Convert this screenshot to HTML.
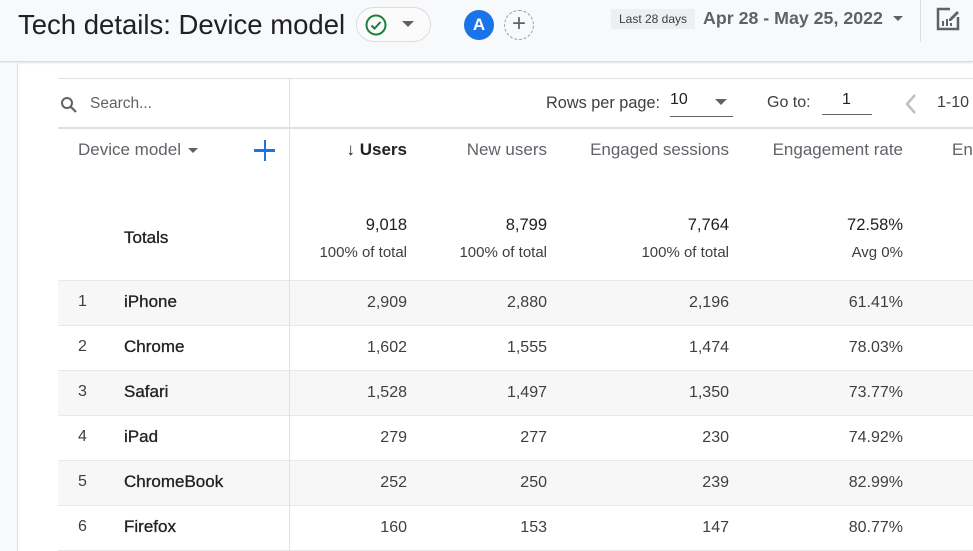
<!DOCTYPE html>
<html><head><meta charset="utf-8"><style>
*{margin:0;padding:0;box-sizing:border-box}
body{width:973px;height:551px;overflow:hidden;background:#fff;font-family:"Liberation Sans",Arial,sans-serif;color:#202124;position:relative}
.a{position:absolute;white-space:nowrap}
.r{text-align:right}
.hdr{left:0;top:0;width:973px;height:62px;background:#f8f9fa;border-bottom:1px solid #dadce0;box-shadow:0 1px 2px rgba(0,0,0,.12)}
.strip{left:0;top:63px;width:18px;height:488px;background:#f8f9fa;border-right:1px solid #e0e0e0}
.row{left:58px;width:915px;height:45px;border-bottom:1px solid #e8e8e8}
.sh{background:#f7f7f7}
.num{font-size:16px;color:#3c4043}
.nm{font-size:17px;color:#202124;left:124px;-webkit-text-stroke:0.3px #202124}
.idx{font-size:16px;left:78px;color:#3c4043}
.ch{font-size:17px;color:#5f6368}
</style></head><body>
<div class="a hdr"></div>
<div class="a" style="left:18px;top:9px;font-size:27.5px;color:#202124">Tech details: Device model</div>
<div class="a" style="left:356px;top:7px;width:75px;height:35px;border:1px solid #dadce0;border-radius:18px;background:#fbfbfb"></div>
<svg class="a" style="left:364px;top:13px" width="24" height="24" viewBox="0 0 24 24"><circle cx="12" cy="12" r="9.5" fill="none" stroke="#188038" stroke-width="2"/><path d="M7.5 12.5l3 3 6-6.5" fill="none" stroke="#188038" stroke-width="2"/></svg>
<div class="a" style="left:402px;top:21px;width:0;height:0;border-left:6px solid transparent;border-right:6px solid transparent;border-top:6px solid #5f6368"></div>
<div class="a" style="left:464px;top:10px;width:30px;height:30px;border-radius:50%;background:#1a73e8;color:#fff;font-weight:bold;font-size:17px;text-align:center;line-height:30px">A</div>
<div class="a" style="left:504px;top:10px;width:30px;height:30px;border-radius:50%;border:1px dashed #9aa0a6;color:#5f6368;font-size:24px;text-align:center;line-height:26px">+</div>
<div class="a" style="left:611px;top:9px;width:84px;height:20px;background:#eeeff0;font-size:12px;color:#3c4043;text-align:center;line-height:20px">Last 28 days</div>
<div class="a" style="left:703px;top:8px;font-size:17.8px;font-weight:bold;color:#5f6368">Apr 28 - May 25, 2022</div>
<div class="a" style="left:893px;top:16px;width:0;height:0;border-left:5px solid transparent;border-right:5px solid transparent;border-top:5px solid #5f6368"></div>
<div class="a" style="left:920px;top:0;width:1px;height:42px;background:#dadce0"></div>
<svg class="a" style="left:935px;top:6px" width="26" height="26" viewBox="0 0 26 26"><path d="M15 3H3v20h20V11" fill="none" stroke="#5f6368" stroke-width="2.5"/><path d="M14 13l8-8 2 2-8 8h-2z" fill="#5f6368"/><rect x="7" y="15" width="2" height="5" fill="#5f6368"/><rect x="11" y="13" width="2" height="7" fill="#5f6368"/><rect x="15" y="17" width="2" height="3" fill="#5f6368"/></svg>
<div class="a strip"></div>
<div class="a" style="left:58px;top:78px;width:915px;height:1px;background:#e0e0e0"></div>
<div class="a" style="left:58px;top:127px;width:915px;height:2px;background:#e0e0e0"></div>
<div class="a" style="left:289px;top:78px;width:1px;height:473px;background:#e0e0e0"></div>
<svg class="a" style="left:60px;top:96px" width="18" height="18" viewBox="0 0 18 18"><circle cx="7" cy="7" r="5" fill="none" stroke="#5f6368" stroke-width="2"/><path d="M11 11l5 5" stroke="#5f6368" stroke-width="2.2"/></svg>
<div class="a" style="left:90px;top:95px;font-size:15.5px;color:#5f6368">Search...</div>
<div class="a" style="left:546px;top:94px;font-size:16.3px;color:#3c4043">Rows per page:</div>
<div class="a" style="left:670px;top:91px;font-size:16px;color:#202124">10</div>
<div class="a" style="left:670px;top:116px;width:63px;height:1px;background:#5f6368"></div>
<div class="a" style="left:715px;top:99px;width:0;height:0;border-left:6px solid transparent;border-right:6px solid transparent;border-top:6px solid #5f6368"></div>
<div class="a" style="left:767px;top:94px;font-size:16px;color:#3c4043">Go to:</div>
<div class="a" style="left:842px;top:91px;font-size:16px;color:#202124">1</div>
<div class="a" style="left:822px;top:114px;width:50px;height:1px;background:#5f6368"></div>
<svg class="a" style="left:903px;top:93px" width="16" height="22" viewBox="0 0 16 22"><path d="M12 2L4 11l8 9" fill="none" stroke="#bdc1c6" stroke-width="2.5"/></svg>
<div class="a" style="left:937px;top:94px;font-size:16px;color:#3c4043">1-10</div>
<div class="a ch" style="left:78px;top:140px">Device model</div>
<div class="a" style="left:188px;top:148px;width:0;height:0;border-left:5px solid transparent;border-right:5px solid transparent;border-top:5px solid #5f6368"></div>
<div class="a" style="left:254px;top:149px;width:21px;height:2.5px;background:#1a73e8"></div>
<div class="a" style="left:263.5px;top:140px;width:2.5px;height:21px;background:#1a73e8"></div>
<div class="a r" style="right:566px;top:140px;font-size:17px;font-weight:bold;color:#202124">↓ Users</div>
<div class="a r ch" style="right:426px;top:140px">New users</div>
<div class="a r ch" style="right:244px;top:140px">Engaged sessions</div>
<div class="a r ch" style="right:70px;top:140px">Engagement rate</div>
<div class="a ch" style="left:952px;top:140px">Eng</div>
<div class="a" style="left:124px;top:228px;font-size:17px;-webkit-text-stroke:0.3px #202124">Totals</div>
<div class="a r" style="right:566px;top:216px;font-size:16.5px">9,018</div>
<div class="a r" style="right:426px;top:216px;font-size:16.5px">8,799</div>
<div class="a r" style="right:244px;top:216px;font-size:16.5px">7,764</div>
<div class="a r" style="right:70px;top:216px;font-size:16.5px">72.58%</div>
<div class="a r num" style="right:566px;top:244px;font-size:15px">100% of total</div>
<div class="a r num" style="right:426px;top:244px;font-size:15px">100% of total</div>
<div class="a r num" style="right:244px;top:244px;font-size:15px">100% of total</div>
<div class="a r num" style="right:70px;top:244px;font-size:15px">Avg 0%</div>
<div class="a" style="left:58px;top:280px;width:915px;height:1px;background:#e8e8e8"></div>

<div class="a row sh" style="top:281px"></div>
<div class="a row" style="top:326px"></div>
<div class="a row sh" style="top:371px"></div>
<div class="a row" style="top:416px"></div>
<div class="a row sh" style="top:461px"></div>
<div class="a row" style="top:506px"></div>
<div class="a" style="left:289px;top:280px;width:1px;height:271px;background:#e0e0e0"></div>

<div class="a idx" style="top:293px">1</div><div class="a nm" style="top:292px">iPhone</div>
<div class="a r num" style="right:566px;top:294px">2,909</div><div class="a r num" style="right:426px;top:294px">2,880</div><div class="a r num" style="right:244px;top:294px">2,196</div><div class="a r num" style="right:70px;top:294px">61.41%</div>
<div class="a idx" style="top:338px">2</div><div class="a nm" style="top:337px">Chrome</div>
<div class="a r num" style="right:566px;top:339px">1,602</div><div class="a r num" style="right:426px;top:339px">1,555</div><div class="a r num" style="right:244px;top:339px">1,474</div><div class="a r num" style="right:70px;top:339px">78.03%</div>
<div class="a idx" style="top:383px">3</div><div class="a nm" style="top:382px">Safari</div>
<div class="a r num" style="right:566px;top:384px">1,528</div><div class="a r num" style="right:426px;top:384px">1,497</div><div class="a r num" style="right:244px;top:384px">1,350</div><div class="a r num" style="right:70px;top:384px">73.77%</div>
<div class="a idx" style="top:428px">4</div><div class="a nm" style="top:427px">iPad</div>
<div class="a r num" style="right:566px;top:429px">279</div><div class="a r num" style="right:426px;top:429px">277</div><div class="a r num" style="right:244px;top:429px">230</div><div class="a r num" style="right:70px;top:429px">74.92%</div>
<div class="a idx" style="top:473px">5</div><div class="a nm" style="top:472px">ChromeBook</div>
<div class="a r num" style="right:566px;top:474px">252</div><div class="a r num" style="right:426px;top:474px">250</div><div class="a r num" style="right:244px;top:474px">239</div><div class="a r num" style="right:70px;top:474px">82.99%</div>
<div class="a idx" style="top:518px">6</div><div class="a nm" style="top:517px">Firefox</div>
<div class="a r num" style="right:566px;top:519px">160</div><div class="a r num" style="right:426px;top:519px">153</div><div class="a r num" style="right:244px;top:519px">147</div><div class="a r num" style="right:70px;top:519px">80.77%</div>
</body></html>
